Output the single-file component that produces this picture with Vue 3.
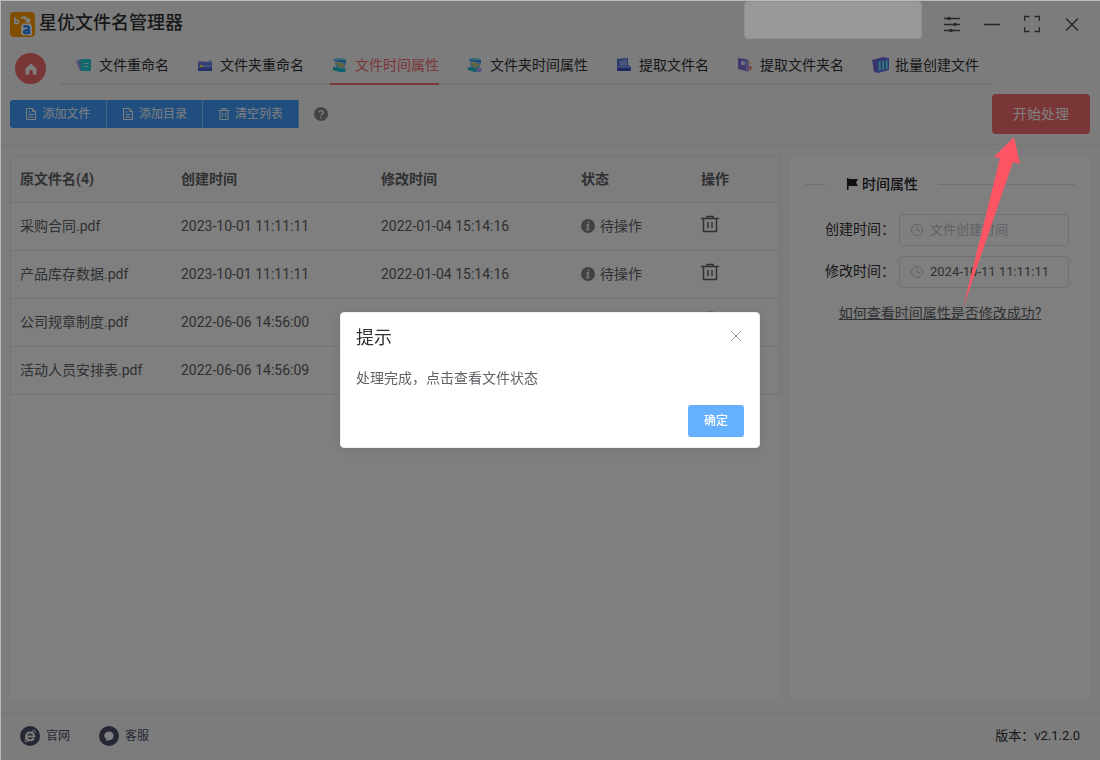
<script setup>
import { ref } from 'vue'

const tabs = [
  { id: 'rename', label: '文件重命名' },
  { id: 'folder', label: '文件夹重命名' },
  { id: 'time', label: '文件时间属性' },
  { id: 'time2', label: '文件夹时间属性' },
  { id: 'extract', label: '提取文件名' },
  { id: 'extract2', label: '提取文件夹名' },
  { id: 'batch', label: '批量创建文件' },
]
const active = ref('time')
const files = [
  { name: '采购合同.pdf', created: '2023-10-01 11:11:11', modified: '2022-01-04 15:14:16', status: '待操作' },
  { name: '产品库存数据.pdf', created: '2023-10-01 11:11:11', modified: '2022-01-04 15:14:16', status: '待操作' },
  { name: '公司规章制度.pdf', created: '2022-06-06 14:56:00' },
  { name: '活动人员安排表.pdf', created: '2022-06-06 14:56:09' },
]
const created = ref('')
const modified = ref('2024-10-11 11:11:11')
</script>

<template>
  <div class="app">
    <header class="titlebar">
      <svg class="logo" viewBox="0 0 25 25">
        <rect width="25" height="25" rx="4" fill="#ff9c00" />
        <path d="M5 5v7M5 9.800a1.800 1.800 0 1 0 3.600 0a1.800 1.800 0 1 0-3.600 0" fill="none" stroke="#fff" stroke-width="1.600" />
        <path d="M10 6c3-3 7-2 8 1l2-1v5l-5-1 1.500-1.200c-1.500-2.300-3.500-2.500-6.500-2.300z" fill="#fff" />
        <path d="M13 11.500h7l2 2v10H13l-2-2v-8z" fill="#fff" />
        <path d="M13.500 15c2-1.500 5.500-1 5.500 1.500V22M19 18c-3 0-5 .2-5 2s4 1.800 5-.2" fill="none" stroke="#2f86ff" stroke-width="2.400" />
      </svg>
      <h1>星优文件名管理器</h1>
      <div class="window-tools">
        <button aria-label="设置">
          <svg viewBox="0 0 16 18" class="ink"><path d="M0 3.500h16M0 9.500h16M0 15.500h16" /><g fill="#505152" stroke="none"><circle cx="5" cy="3.500" r="1.800" /><circle cx="11" cy="9.500" r="1.800" /><circle cx="7" cy="15.500" r="1.800" /></g></svg>
        </button>
        <button aria-label="最小化"><svg viewBox="0 0 16 18" class="ink"><path d="M0 9.500h16" /></svg></button>
        <button aria-label="最大化"><svg viewBox="0 0 16 18" class="ink"><path d="M.5 6V1.500h5M10.500 1.500h5V6M15.500 12v4.500h-5M5.500 16.500h-5V12" /></svg></button>
        <button aria-label="关闭"><svg viewBox="0 0 16 18" class="ink"><path d="M2 3.500l12 12M14 3.500l-12 12" /></svg></button>
      </div>
    </header>

    <div class="nav-row">
      <button class="home" aria-label="首页">
        <svg viewBox="0 0 12 12"><path d="M6 .5L11.500 5.500V11.500H7.800V8.500a1.800 1.800 0 0 0-3.600 0v3H.5v-6z" fill="#fff" /></svg>
      </button>
      <nav class="tabs">
        <button v-for="t in tabs" :key="t.id" class="tab" @click="active = t.id">
          <span class="tab-inner" :class="{ active: active === t.id }">
            <span class="tab-icon">
              <svg v-if="t.id === 'rename'" viewBox="0 0 16 16">
                <path d="M0 4l6-2 2 11-4 1z" fill="#b09aec" /><path d="M2 3l5-1v11l-3-1z" fill="#6fa9ea" />
                <rect x="5" y="2" width="10" height="12" rx="1" fill="#22d0d8" /><path d="M7.500 6.500h5M7.500 9.500h5" stroke="#c4f4f4" />
              </svg>
              <svg v-else-if="t.id === 'folder'" viewBox="0 0 16 16">
                <path d="M1 5l1-1h5l1 1 6-2 1 1v2z" fill="#a9aef2" /><rect x="1" y="5" width="14" height="9" rx="1" fill="#6c84ea" />
                <path d="M1 11h14v3H1z" fill="#4b62d0" /><path d="M3 8h3v2H3z" fill="#ffe94f" /><path d="M7 9h6" stroke="#a7c5ff" />
              </svg>
              <svg v-else-if="t.id === 'time' || t.id === 'time2'" viewBox="0 0 16 16">
                <path d="M3 1l11 1v4L2 4z" fill="#2c8eed" /><path d="M3 1l11 1v1.500L2 3z" fill="#79dcf7" />
                <path d="M3 5l11 1-2 6-8-1z" fill="#7cc4de" /><path d="M5 6.500h3M9 8h3M6 9h3" fill="none" stroke="#f5cf31" stroke-width="1.500" />
                <path d="M1 10l11 2 2-1-1 4-5 0-7-2z" fill="#19bed4" />
                <path v-if="t.id === 'time2'" d="M9 12l6-1-1 4H9z" fill="#a4a3ff" />
              </svg>
              <svg v-else-if="t.id === 'extract'" viewBox="0 0 16 16">
                <path d="M1 2l11-1v9H1z" fill="#4a72d8" /><path d="M3 4l8-2v6l-7 1z" fill="#94aef0" />
                <path d="M1 9l12-1 2 2v4H1z" fill="#7891f0" /><path d="M1 11h14l-1 3H1z" fill="#3a54c0" />
              </svg>
              <svg v-else-if="t.id === 'extract2'" viewBox="0 0 16 16">
                <path d="M1 1l8 1v12l-8-2z" fill="#7f76dc" /><path d="M9 2l3 1v11l-3 1z" fill="#a99ae4" />
                <rect x="4" y="4" width="4" height="4" rx="1" fill="#dce0ff" /><path d="M12 5h2v2h-2z" fill="#ffd35a" /><path d="M12.500 9h2v3l-2 2z" fill="#f06a79" />
              </svg>
              <svg v-else class="large" viewBox="0 0 18 18">
                <path d="M0 4l11-3 6 1v12l-11 3-4-1z" fill="#7468dc" /><path d="M5 5l12-2v10L6 16z" fill="#4f86e4" />
                <path d="M7 5.500l1.500-.3v9l-1.500.3zM10.500 5l1.500-.3v9l-1.500.3zM14 4.500l1.500-.3v8.500l-1.500.3z" fill="#6ff1f4" />
              </svg>
            </span>{{ t.label }}
          </span>
        </button>
      </nav>
    </div>

    <section class="toolbar">
      <div class="group">
        <button v-for="(label, i) in ['添加文件', '添加目录', '清空列表']" :key="label">
          <svg v-if="i < 2" viewBox="0 0 12 12"><path d="M1.500.5h6l3 3v8h-9zM7.500.5v3h3M3.500 4h2M3.500 6.500h5M3.500 9h5" /></svg>
          <svg v-else viewBox="0 0 12 12"><path d="M.5 2.500h11M4 2.500v-2h4v2M2 2.500v9h8v-9M4.500 5v4M7.500 5v4" /></svg>
          {{ label }}
        </button>
      </div>
      <svg class="dot" viewBox="0 0 14 14"><circle cx="7" cy="7" r="7" fill="#84868a" /><path d="M5 5.500c0-2.500 4.200-2.500 4.200 0C9.200 7 7 7 7 8.500M7 9.800v1.400" fill="none" stroke="#fff" stroke-width="1.400" /></svg>
      <button class="start">开始处理</button>
    </section>

    <main class="content">
      <section class="panel list">
        <table>
          <colgroup><col class="c-name"><col class="c-time"><col class="c-time"><col class="c-status"><col></colgroup>
          <thead>
            <tr><th>原文件名(4)</th><th>创建时间</th><th>修改时间</th><th>状态</th><th>操作</th></tr>
          </thead>
          <tbody>
            <tr v-for="f in files" :key="f.name">
              <td>{{ f.name }}</td>
              <td>{{ f.created }}</td>
              <td>{{ f.modified }}</td>
              <td>
                <span v-if="f.status" class="status">
                  <svg class="dot" viewBox="0 0 14 14"><circle cx="7" cy="7" r="7" fill="#84868a" /><path d="M7.800 2.600l-.3 1.500M5.500 6h1.800l-1 4.500h1.900" fill="none" stroke="#fff" stroke-width="1.400" /></svg>
                  {{ f.status }}
                </span>
              </td>
              <td>
                <button class="trash" aria-label="删除">
                  <svg viewBox="0 0 18 18"><path d="M0 3.500h18M6 3.500v-2h6v2M2.500 3.500v13h13v-13M7 7v6M11 7v6" /></svg>
                </button>
              </td>
            </tr>
          </tbody>
        </table>
      </section>

      <aside class="panel side">
        <h2>
          <svg viewBox="0 0 11 12"><path d="M0 0h1.500v12H0zM1 1h10L9 4.500l2 3.500H1z" fill="#202124" /></svg>
          <span>时间属性</span>
        </h2>
        <div class="field">
          <label for="created">创建时间：</label>
          <div class="input">
            <svg viewBox="0 0 14 14"><circle cx="7" cy="7" r="5.500" /><path d="M7 4v3.500h3" /></svg>
            <input id="created" v-model="created" type="text" placeholder="文件创建时间">
          </div>
        </div>
        <div class="field">
          <label for="modified">修改时间：</label>
          <div class="input">
            <svg viewBox="0 0 14 14"><circle cx="7" cy="7" r="5.500" /><path d="M7 4v3.500h3" /></svg>
            <input id="modified" v-model="modified" type="text">
          </div>
        </div>
        <a href="#" class="help">如何查看时间属性是否修改成功?</a>
      </aside>
    </main>

    <footer>
      <a href="#">
        <svg viewBox="0 0 20 20"><circle cx="10" cy="10" r="10" fill="#4a5068" /><path d="M6 10.500h8.300c0-5.500-8.300-5.500-8.300 0 0 4.500 6.500 4.800 8 1.800" fill="none" stroke="#fff" stroke-width="2" /><path d="M6 12c-3 5 1 4 3 2.500M12 5.500c3-2 4-1 3 1.500" fill="none" stroke="#fff" /></svg>
        官网
      </a>
      <a href="#">
        <svg viewBox="0 0 20 20"><circle cx="10" cy="10" r="10" fill="#4a5068" /><path d="M10 5.500c6 0 6 8 1 8.500l-4 1 .3-2C3.500 10.500 5.500 5.500 10 5.500z" fill="#fff" /></svg>
        客服
      </a>
      <span class="version">版本：v2.1.2.0</span>
    </footer>

    <div class="overlay">
      <div class="blank"></div>
      <div class="dialog" role="dialog" aria-labelledby="dialog-title">
        <div class="dialog-head">
          <h3 id="dialog-title">提示</h3>
          <button class="close" aria-label="关闭提示"><svg viewBox="0 0 12 12"><path d="M1 1l10 10M11 1L1 11" /></svg></button>
        </div>
        <p>处理完成，点击查看文件状态</p>
        <div class="dialog-foot"><button class="ok">确定</button></div>
      </div>
      <svg class="arrow" viewBox="0 0 58 172"><path d="M52 0L58 27 51 25 1 171 38 21 32 20z" fill="#ff5464" /></svg>
    </div>
  </div>
</template>

<style>
body { margin: 0; }
</style>

<style scoped>
* { box-sizing: border-box; }
.app {
  min-height: 100vh;
  display: flex;
  flex-direction: column;
  background: #f9f9f9;
  color: #303133;
  font: 14px/20px Roboto, "Noto Sans CJK SC", sans-serif;
}
button { font: inherit; color: inherit; border: 0; padding: 0; background: none; cursor: pointer; }
svg { display: block; flex: none; }
h1, h2, h3, p { margin: 0; }

.titlebar { height: 48px; display: flex; align-items: center; padding: 0 20px 0 10px; }
.logo { width: 25px; height: 25px; }
h1 { margin-left: 4px; font-size: 18px; line-height: 24px; font-weight: 500; padding-bottom: 2px; }
.window-tools { margin-left: auto; display: flex; gap: 24px; }
.window-tools svg { width: 16px; height: 18px; }
.ink { fill: none; stroke: #505152; stroke-width: 1.5; }

.nav-row { display: flex; align-items: flex-end; padding-left: 15px; height: 37px; }
.home { width: 31px; height: 31px; border-radius: 50%; background: #f56c6c; display: grid; place-items: center; margin: 0 15px 1px 0; }
.home svg { width: 12px; height: 12px; }
.tabs { display: flex; height: 36px; border-bottom: 2px solid #e4e7ed; }
.tab { padding: 0 13px; height: 36px; white-space: nowrap; }
.tab-inner { height: 36px; display: flex; align-items: center; padding-bottom: 2px; border-bottom: 2px solid transparent; }
.tab-inner.active { color: #f56c6c; border-color: #f56c6c; }
.tab-icon { width: 25px; }
.tab-icon svg { width: 16px; height: 16px; margin-left: 2px; }
.tab-icon svg.large { width: 18px; height: 18px; }

.toolbar { height: 60px; display: flex; align-items: center; padding: 0 10px 1px; border-bottom: 1px solid #ececec; }
.group { display: flex; border-radius: 3px 0 0 3px; overflow: hidden; margin-right: 15px; }
.group button { height: 28px; width: 96px; display: flex; align-items: center; justify-content: center; gap: 5px; background: #409eff; color: #fff; font-size: 12px; border-right: 1px solid #8cc5ff; }
.group button:first-child { width: 97px; }
.group svg { width: 12px; height: 12px; fill: none; stroke: #fff; }
.dot { width: 14px; height: 14px; }
.start { margin-left: auto; width: 98px; height: 40px; border-radius: 4px; background: #f56c6c; color: #fff; }

.content { flex: 1; display: grid; grid-template-columns: 1fr 300px; gap: 10px; padding: 10px 10px 12px; }
.panel { background: #fff; }
table { width: 100%; border: 1px solid #e6e8ec; border-bottom: 0; border-spacing: 0; table-layout: fixed; color: #606266; }
.c-name { width: 161px; }
.c-time { width: 200px; }
.c-status { width: 120px; }
th, td { height: 48px; padding: 0 0 1px 9px; text-align: left; border-bottom: 1px solid #e6e8ec; }
th { height: 47px; background: #fafafa; font-weight: 700; }
.status { display: flex; align-items: center; gap: 5px; }
.trash { display: block; margin-bottom: 4px; }
.trash svg { width: 18px; height: 18px; fill: none; stroke: #606266; stroke-width: 1.5; }

.side { padding: 19px 15px 0; }
h2 { display: flex; align-items: center; font-size: 14px; line-height: 20px; font-weight: 500; margin-bottom: 20px; color: #202124; }
h2::before, h2::after { content: ""; height: 1px; background: #dcdfe6; }
h2::before { width: 20px; margin-right: 22px; }
h2::after { flex: 1; margin-left: 20px; }
h2 svg { width: 11px; height: 12px; margin-right: 4px; }
.field { display: flex; align-items: center; padding: 0 6px 0 20px; margin-bottom: 10px; }
.field label { white-space: nowrap; width: 74px; padding-bottom: 2px; }
.input { flex: 1; min-width: 0; height: 32px; display: flex; align-items: center; gap: 6px; padding: 0 10px; border: 1px solid #dcdfe6; border-radius: 4px; }
.input svg { width: 14px; height: 14px; fill: none; stroke: #c0c4cc; }
.input input { flex: 1; min-width: 0; padding: 0; border: 0; outline: 0; background: none; font: inherit; font-size: 13px; color: #606266; }
.input input::placeholder { color: #c0c4cc; }
.help { display: block; margin-top: 15px; text-align: center; color: #606266; }

footer { height: 48px; border-top: 1px solid #ececec; padding: 0 20px 1px; display: flex; align-items: center; gap: 29px; font-size: 12px; }
footer a { display: flex; align-items: center; gap: 6px; color: #4a5068; text-decoration: none; }
footer svg { width: 20px; height: 20px; }
.version { margin-left: auto; font-size: 13px; color: #303133; }

.overlay { position: fixed; inset: 0; display: flex; align-items: center; justify-content: center; background: rgba(0, 0, 0, 0.5); box-shadow: inset 1px 1px #b9bbbb; }
.blank { position: absolute; top: 1px; right: 178px; width: 178px; height: 38px; border-radius: 4px; background: #999; border: 1px solid #919191; }
.arrow { position: absolute; top: 137px; right: 80px; width: 58px; height: 172px; }
.dialog { width: 420px; padding: 15px 15px 10px; background: #fff; border: 1px solid #ebeef5; border-radius: 4px; box-shadow: 0 2px 12px rgba(0, 0, 0, 0.1); }
.dialog-head { display: flex; justify-content: space-between; align-items: center; height: 20px; }
h3 { font-size: 18px; line-height: 20px; font-weight: 400; color: #303133; }
.close { padding: 0 2px 4px 0; }
.close svg { width: 12px; height: 12px; fill: none; stroke: #909399; }
.dialog p { margin: 20px 0 17px; color: #606266; }
.dialog-foot { display: flex; justify-content: flex-end; }
.ok { width: 56px; height: 32px; border-radius: 3px; background: #66b1ff; color: #fff; font-size: 12px; font-weight: 500; }
</style>
